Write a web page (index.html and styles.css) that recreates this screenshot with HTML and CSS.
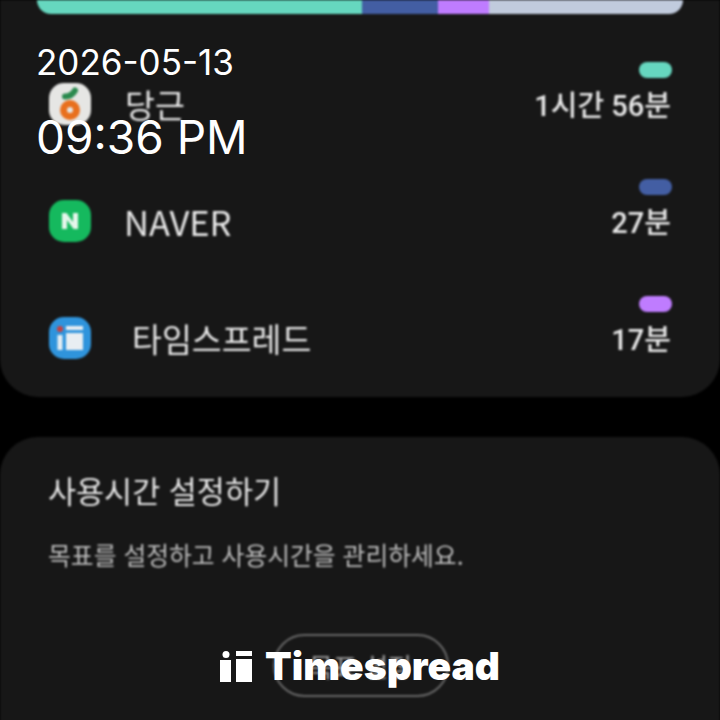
FILE: index.html
```html
<!doctype html>
<html lang="ko">
<head>
    <meta charset="utf-8">
    <title>Timespread</title>
    <link rel="stylesheet" href="styles.css">
</head>
<body>
    <div class="page">
        <div class="card usage">
            <div class="bar">
                <span class="seg teal"></span>
                <span class="seg blue"></span>
                <span class="seg purple"></span>
                <span class="seg rest"></span>
            </div>
            <ul class="apps">
                <li class="app">
                    <svg class="icon" viewBox="0 0 42 42">
                        <rect width="42" height="42" rx="15" fill="#e6e6e4"/>
                        <path d="M16 13.500 C20 13.500 24 11 26 7.500" stroke="#2a8a4e" stroke-width="6" stroke-linecap="round" fill="none"/>
                        <circle cx="21" cy="27" r="6.500" fill="none" stroke="#e8701e" stroke-width="7"/>
                    </svg>
                    <span class="name">당근</span>
                    <div class="stat">
                        <span class="pill teal"></span>
                        <span class="time">1시간 56분</span>
                    </div>
                </li>
                <li class="app">
                    <svg class="icon" viewBox="0 0 42 42">
                        <rect width="42" height="42" rx="15" fill="#15b95e"/>
                        <path d="M13 29 V13 H17.500 L24 22 V13 H29 V29 H24.500 L18 20 V29 Z" fill="#e6f6ec"/>
                    </svg>
                    <span class="name latin">NAVER</span>
                    <div class="stat">
                        <span class="pill blue"></span>
                        <span class="time">27분</span>
                    </div>
                </li>
                <li class="app">
                    <svg class="icon" viewBox="0 0 42 42">
                        <rect width="42" height="42" rx="15" fill="#2f94dc"/>
                        <circle cx="11" cy="12" r="3" fill="#c8403f"/>
                        <rect x="8.500" y="18" width="5" height="15" fill="#e8eef2"/>
                        <rect x="17" y="9" width="17" height="4" fill="#e8eef2"/>
                        <rect x="17" y="16" width="17" height="17" fill="#e8eef2"/>
                    </svg>
                    <span class="name wide">타임스프레드</span>
                    <div class="stat">
                        <span class="pill purple"></span>
                        <span class="time">17분</span>
                    </div>
                </li>
            </ul>
        </div>

        <div class="card goal">
            <h2 class="goal-title">사용시간 설정하기</h2>
            <p class="goal-desc">목표를 설정하고 사용시간을 관리하세요.</p>
            <div class="goal-action">
                <span class="goal-btn">목표 설정</span>
            </div>
        </div>

        <div class="stamp">
            <div class="stamp-date">2026-05-13</div>
            <div class="stamp-time">09:36 PM</div>
        </div>

        <div class="logo">
            <svg class="logo-mark" viewBox="0 0 32 31">
                <circle cx="6" cy="3.500" r="3.500" fill="#fff"/>
                <rect x="0" y="9" width="11" height="22" fill="#fff"/>
                <rect x="16" y="0" width="16" height="5" fill="#fff"/>
                <rect x="16" y="8" width="16" height="23" fill="#fff"/>
            </svg>
            <span class="logo-text">Timespread</span>
        </div>
    </div>
</body>
</html>
```

FILE: styles.css
```css
* {
    box-sizing: border-box;
}

body, ul, li, h2, p {
    margin: 0;
    padding: 0;
    list-style: none;
}

body {
    background: #000;
    font-family: "Noto Sans CJK KR", "Roboto", sans-serif;
}

.page {
    width: 720px;
    height: 720px;
    position: relative;
    overflow: hidden;
    background: #000;
}

.card {
    background: #171717;
    filter: blur(0.8px);
}

.usage {
    height: 397px;
    padding: 0 37px;
    border-radius: 0 0 38px 38px;
}

.bar {
    display: flex;
    height: 14px;
    border-radius: 0 0 15px 15px;
    overflow: hidden;
}

.seg {
    display: block;
}

.bar .teal {
    width: 325px;
}

.bar .blue {
    width: 76px;
}

.bar .purple {
    width: 51px;
}

.bar .rest {
    flex: 1;
}

.teal {
    background: #66d7bf;
}

.blue {
    background: #435ea3;
}

.purple {
    background: #bf7cff;
}

.rest {
    background: #c1cbdd;
}

.apps {
    padding: 7px 12px 0 12px;
}

.app {
    display: flex;
    align-items: flex-end;
    height: 117px;
    color: #e8e8e8;
}

.icon {
    width: 42px;
    height: 42px;
    margin-bottom: 13px;
    flex-shrink: 0;
}

.name {
    margin-left: 34px;
    margin-bottom: 13px;
    font-size: 32.500px;
    line-height: 42px;
    flex: 1;
}

.name.latin {
    margin-left: 33px;
    font-size: 34.500px;
}

.name.wide {
    margin-left: 41px;
}

.stat {
    display: flex;
    flex-direction: column;
    align-items: flex-end;
    margin-bottom: 11px;
}

.pill {
    display: block;
    width: 33px;
    height: 16px;
    margin-right: -1px;
    margin-bottom: 7px;
    border-radius: 8px;
}

.time {
    font-family: "Roboto", "Noto Sans CJK KR", sans-serif;
    font-size: 29px;
    font-weight: 500;
    line-height: 42px;
}

.goal {
    margin-top: 40px;
    height: 320px;
    padding: 31px 48px 0;
    border-radius: 38px 38px 0 0;
}

.goal-title {
    font-size: 30.500px;
    font-weight: 400;
    line-height: 44px;
    color: #e8e8e8;
}

.goal-desc {
    margin-top: 25px;
    font-size: 24.800px;
    line-height: 34px;
    color: #bcbcbc;
}

.goal-action {
    display: flex;
    justify-content: center;
    margin-top: 63px;
}

.goal-btn {
    display: flex;
    align-items: center;
    justify-content: center;
    width: 176px;
    height: 63px;
    margin-left: 1px;
    border: 2px solid #666;
    border-radius: 32px;
    font-size: 26px;
    color: #9a9a9a;
}

.stamp {
    position: absolute;
    left: 36px;
    top: 40px;
    color: #fff;
    font-family: "Inter", sans-serif;
}

.stamp-date {
    font-size: 35px;
    line-height: 44px;
}

.stamp-time {
    margin-top: 25px;
    font-size: 46px;
    line-height: 56px;
}

.logo {
    position: absolute;
    left: 220px;
    top: 645px;
    display: flex;
    align-items: center;
    gap: 13px;
    color: #fff;
}

.logo-mark {
    width: 32px;
    height: 31px;
}

.logo-text {
    font-family: "Inter", sans-serif;
    font-size: 39px;
    font-weight: 900;
    line-height: 42px;
}
```
